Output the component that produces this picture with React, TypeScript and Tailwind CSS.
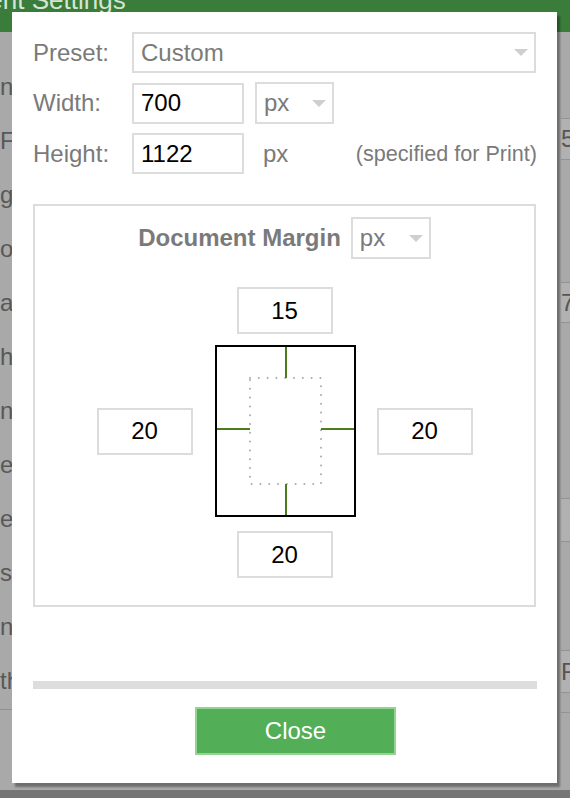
import React, { useState } from 'react';

const labelCls = 'text-[24px] leading-none text-[#7a7a7a]';
const boxCls =
  'h-[41px] border-2 border-[#dcdcdc] bg-white px-[7px] text-[24px] leading-none outline-none';

function Caret() {
  return (
    <svg width="14" height="7" viewBox="0 0 14 7" className="shrink-0">
      <path d="M0 0 L14 0 L7 7 Z" fill="#cfcfcf" />
    </svg>
  );
}

function FakeSelect({ value, className }: { value: string; className: string }) {
  return (
    <div
      className={`flex items-center justify-between border-2 border-[#dcdcdc] bg-white pl-[7px] pr-[6px] ${className}`}
    >
      <span className="text-[24px] leading-none text-[#7a7a7a]">{value}</span>
      <Caret />
    </div>
  );
}

function MarginInput({ value }: { value: string }) {
  const [v, setV] = useState(value);
  return (
    <input
      value={v}
      onChange={(e) => setV(e.target.value)}
      className="h-[47px] w-[96px] border-2 border-[#dcdcdc] bg-white text-center text-[24px] leading-none text-black outline-none"
    />
  );
}

// page outline with the margin guides
function PagePreview() {
  return (
    <svg width="141" height="172" viewBox="0 0 141 172" className="shrink-0">
      <rect x="1" y="1" width="139" height="170" fill="white" stroke="#000" strokeWidth="2" />
      <rect
        x="35"
        y="33"
        width="71"
        height="106"
        fill="none"
        stroke="#a9a9a9"
        strokeWidth="2"
        strokeDasharray="0 8.8"
        strokeLinecap="round"
      />
      <g stroke="#4b7d1c" strokeWidth="2">
        <line x1="71" y1="2" x2="71" y2="33" />
        <line x1="71" y1="139" x2="71" y2="170" />
        <line x1="2" y1="84" x2="35" y2="84" />
        <line x1="106" y1="84" x2="139" y2="84" />
      </g>
    </svg>
  );
}

export default function App() {
  const [width, setWidth] = useState('700');
  const [height, setHeight] = useState('1122');

  const leftRows = ['n', 'Fo', 'g', 'ol', 'at', 'h', 'ne', 'ec', 'ed', 's', 'n', 'th'];

  return (
    <div className="relative h-[798px] w-[570px] overflow-hidden bg-[#a9a9a9] font-['Liberation_Sans',Arial,sans-serif]">
      {/* page behind the dialog */}
      <div className="flex h-full flex-col">
        <div className="flex h-8 shrink-0 items-start overflow-hidden bg-[#3a7d3b]">
          <span className="-ml-[94px] -mt-[13px] whitespace-nowrap text-[26px] leading-none text-[#d6e4d4]">
            Document Settings
          </span>
        </div>
        <div className="flex flex-1">
          <div className="flex w-[12px] flex-col overflow-hidden pt-[43px]">
            {leftRows.map((t, i) => (
              <div key={i} className="h-[54px] whitespace-nowrap text-[24px] leading-none text-[#585858]">
                {t}
              </div>
            ))}
            <div className="mt-[-14px] border-t border-[#909090]" />
          </div>
          <div className="flex-1" />
          <div className="flex w-[12px] flex-col overflow-hidden pl-[3px]">
            <div className="h-[86px]" />
            <div className="flex h-[42px] items-center border-y border-[#939393] bg-[#b1b1b1] text-[24px] text-[#555]">5</div>
            <div className="h-[122px]" />
            <div className="flex h-[41px] items-center border-y border-[#939393] bg-[#b1b1b1] text-[24px] text-[#555]">7</div>
            <div className="h-[175px]" />
            <div className="h-[44px] border-y border-[#939393] bg-[#b1b1b1]" />
            <div className="h-[108px]" />
            <div className="flex h-[43px] items-center border-y border-[#939393] bg-[#b1b1b1] text-[24px] text-[#555]">R</div>
            <div className="h-[20px] border-b border-[#939393]" />
          </div>
        </div>
        <div className="h-[8px] shrink-0 bg-[#767676]" />
      </div>

      {/* settings dialog */}
      <div className="absolute left-[12px] top-[12px] flex h-[771px] w-[545px] flex-col bg-white px-[21px] pt-[20px] shadow-[3px_4px_2px_rgba(0,0,0,0.35)]">
        <div className="flex flex-col gap-[9px]">
          <div className="flex items-center">
            <div className={`w-[99px] ${labelCls}`}>Preset:</div>
            <FakeSelect value="Custom" className="h-[41px] w-[404px]" />
          </div>
          <div className="flex items-center">
            <div className={`w-[99px] ${labelCls}`}>Width:</div>
            <input
              value={width}
              onChange={(e) => setWidth(e.target.value)}
              className={`w-[112px] text-black ${boxCls}`}
            />
            <FakeSelect value="px" className="ml-[11px] h-[42px] w-[79px]" />
          </div>
          <div className="flex items-center">
            <div className={`w-[99px] ${labelCls}`}>Height:</div>
            <input
              value={height}
              onChange={(e) => setHeight(e.target.value)}
              className={`w-[112px] text-black ${boxCls}`}
            />
            <span className={`ml-[19px] ${labelCls}`}>px</span>
            <span className="ml-auto mr-[-1px] text-[21.6px] leading-none text-[#7a7a7a]">
              (specified for Print)
            </span>
          </div>
        </div>

        <div className="mt-[30px] flex h-[403px] flex-col items-center border-2 border-[#dcdcdc] pt-[11px]">
          <div className="flex items-center gap-[10px]">
            <span className="text-[24px] font-bold leading-none text-[#7a7a7a]">Document Margin</span>
            <FakeSelect value="px" className="h-[42px] w-[80px]" />
          </div>
          <div className="mt-[28px] flex flex-col items-center">
            <MarginInput value="15" />
            <div className="mt-[11px] flex items-center">
              <MarginInput value="20" />
              <div className="ml-[22px] mr-[21px]">
                <PagePreview />
              </div>
              <MarginInput value="20" />
            </div>
            <div className="mt-[14px]">
              <MarginInput value="20" />
            </div>
          </div>
        </div>

        <div className="mt-[74px] h-[8px] w-[504px] bg-[#dddddd]" />

        <button
          type="button"
          className="ml-[162px] mt-[18px] h-[48px] w-[201px] border-2 border-[#93d493] bg-[#52ae57] text-[24px] leading-none text-white"
        >
          Close
        </button>
      </div>
    </div>
  );
}
